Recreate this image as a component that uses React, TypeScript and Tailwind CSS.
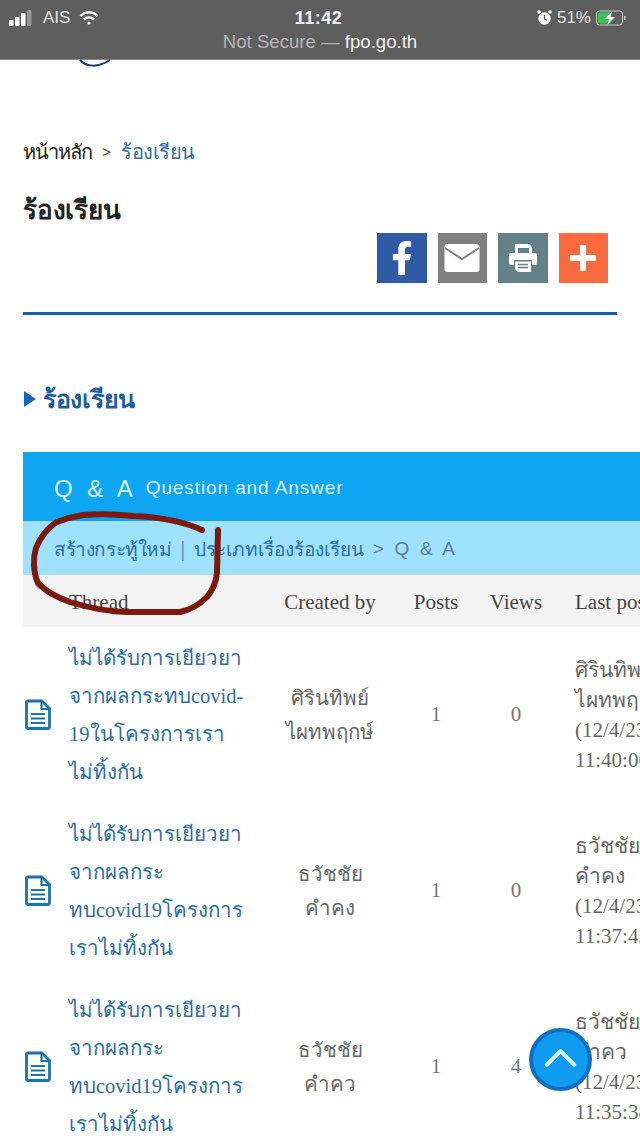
import { ChevronUp } from "lucide-react";
import { FaFacebookF } from "react-icons/fa";

const rows = [
  {
    title: ["ไม่ได้รับการเยียวยา", "จากผลกระทบcovid-", "19ในโครงการเรา", "ไม่ทิ้งกัน"],
    by: ["ศิรินทิพย์", "ไผทพฤกษ์"],
    views: 0,
    last: ["ศิรินทิพย์", "ไผทพฤกษ์", "(12/4/23", "11:40:06"],
  },
  {
    title: ["ไม่ได้รับการเยียวยา", "จากผลกระ", "ทบcovid19โครงการ", "เราไม่ทิ้งกัน"],
    by: ["ธวัชชัย", "คำคง"],
    views: 0,
    last: ["ธวัชชัย", "คำคง", "(12/4/23", "11:37:42"],
  },
  {
    title: ["ไม่ได้รับการเยียวยา", "จากผลกระ", "ทบcovid19โครงการ", "เราไม่ทิ้งกัน"],
    by: ["ธวัชชัย", "คำคว"],
    views: 4,
    last: ["ธวัชชัย", "คำคว", "(12/4/23", "11:35:38"],
  },
];

function DocIcon() {
  return (
    <svg width="28" height="32" viewBox="0 0 28 32" fill="none" stroke="#1f6fb2" strokeWidth="2.8" strokeLinejoin="round">
      <path d="M2.5 3.5 a1.5 1.5 0 0 1 1.5-1.5 H18 L25.5 9.5 V28 a1.5 1.5 0 0 1-1.5 1.5 H4 a1.5 1.5 0 0 1-1.5-1.5 Z" />
      <path d="M17.5 2 V10 H25.5" strokeWidth="2.2" />
      <path d="M7 15 H21 M7 19.5 H21 M7 24 H21" strokeWidth="1.8" />
    </svg>
  );
}

function ShareBox({ color, children }: { color: string; children: React.ReactNode }) {
  return <div className={`flex h-[49.5px] w-[49.5px] items-center justify-center text-white ${color}`}>{children}</div>;
}

export default function App() {
  return (
    <div className="relative h-[1138px] w-[640px] overflow-hidden bg-white font-['Liberation_Serif','Noto_Sans',serif]">
      {/* Safari bar */}
      <div className="h-[60px] bg-[#5e5e5e] border-b border-[#8a8a8a] font-['Liberation_Sans',sans-serif] text-white">
        <div className="flex h-[34px] items-center justify-between pl-[9px] pr-[12px] pt-[1px]">
          <div className="flex w-[200px] items-center gap-[7px]">
            <svg width="27" height="18" viewBox="0 0 27 18" fill="white">
              <rect x="0" y="11" width="4.5" height="6" rx="1" />
              <rect x="6" y="8" width="4.5" height="9" rx="1" />
              <rect x="12" y="4" width="4.5" height="13" rx="1" />
              <rect x="18" y="1" width="4.5" height="16" rx="1" opacity="0.35" />
            </svg>
            <span className="text-[17px] text-[#e4e4e4]">AIS</span>
            <svg width="20" height="16" viewBox="0 0 20 16" fill="none" stroke="white" strokeWidth="2.4" className="ml-[2px]">
              <path d="M1.5 6 C6 1.2 14 1.2 18.5 6" />
              <path d="M5 9.5 C8 6.8 12 6.8 15 9.5" />
              <circle cx="10" cy="13" r="1.6" fill="white" stroke="none" />
            </svg>
          </div>
          <span className="text-[18px] font-bold leading-none text-[#f2f2f2] tracking-[0.5px]">11:42</span>
          <div className="flex w-[200px] items-center justify-end gap-[5px]">
            <svg width="15" height="17" viewBox="0 0 15 17" fill="white">
              <circle cx="7.5" cy="9.5" r="6.2" />
              <circle cx="2" cy="3" r="1.8" />
              <circle cx="13" cy="3" r="1.8" />
              <path d="M7.5 6 V10 L10 11.5" stroke="#5e5e5e" strokeWidth="1.2" fill="none" />
            </svg>
            <span className="text-[17px] text-[#e4e4e4]">51%</span>
            <svg width="32" height="16" viewBox="0 0 32 16" fill="none">
              <rect x="0.5" y="1" width="26" height="14" rx="3" stroke="#c8c8c8" strokeWidth="1" />
              <rect x="2" y="2.5" width="13" height="11" rx="1.5" fill="#3cc35a" />
              <path d="M16 1.5 L9 9 H13.5 L11.5 14.5 L19 7 H14.5 Z" fill="white" />
              <rect x="28" y="6" width="1.5" height="4" fill="#c8c8c8" />
            </svg>
          </div>
        </div>
        <div className="text-center text-[18.6px] leading-[16px] text-[#b5b5b5]">
          Not Secure — <span className="text-[#f0f0f0]">fpo.go.th</span>
        </div>
      </div>

      {/* cropped logo under the bar */}
      <svg className="absolute left-[76px] top-[58px]" width="38" height="12" viewBox="0 0 38 12" fill="none">
        <path d="M4 2 C10 9 22 10 34 2" stroke="#1b3a6b" strokeWidth="2" />
      </svg>

      <div className="px-[23px] font-['Noto_Sans',sans-serif]">
        {/* Breadcrumb */}
        <div className="mt-[74px] flex h-[36px] items-center text-[20px] tracking-[-1px]">
          <span className="text-[#222]">หน้าหลัก</span>
          <span className="mx-[10px] text-[16px] text-[#444]">&gt;</span>
          <span className="ml-[1px] tracking-[-0.5px] text-[#2a6da6]">ร้องเรียน</span>
        </div>
        <h1 className="mt-[21px] h-[36px] text-[26px] font-semibold leading-[36px] text-[#222] tracking-[-0.2px]">ร้องเรียน</h1>

        {/* Share buttons */}
        <div className="mt-[6px] flex w-[585px] justify-end gap-[11px]">
          <ShareBox color="bg-[#2f5aa6]">
            <FaFacebookF size={34} />
          </ShareBox>
          <ShareBox color="bg-[#808080]">
            <svg width="36" height="30" viewBox="0 0 36 30">
              <rect x="0.5" y="1" width="35" height="28" rx="3" fill="white" />
              <path d="M1 5 L18 16 L35 5" fill="none" stroke="#808080" strokeWidth="2" />
            </svg>
          </ShareBox>
          <ShareBox color="bg-[#648088]">
            <svg width="30" height="30" viewBox="0 0 30 30" fill="white">
              <path d="M7 1 H21 L24 4 V10 H21 V5 H10 V10 H7 Z" />
              <path d="M3 10 H27 A2 2 0 0 1 29 12 V20 A2 2 0 0 1 27 22 H24 V17 H6 V22 H3 A2 2 0 0 1 1 20 V12 A2 2 0 0 1 3 10 Z" />
              <path d="M7 18.5 H23 V29 H10 L7 26 Z" />
              <path d="M10 21.5 H20 M10 24.5 H20" stroke="#648088" strokeWidth="1.4" />
            </svg>
          </ShareBox>
          <div className="flex h-[49.5px] w-[49.5px] items-center justify-center bg-[#f96a3f]">
            <svg width="26" height="26" viewBox="0 0 26 26" fill="white">
              <path d="M10 0 H16 V10 H26 V16 H16 V26 H10 V16 H0 V10 H10 Z" />
            </svg>
          </div>
        </div>
        <div className="mt-[29.5px] h-[3px] w-[594px] bg-[#1a5fb0]" />

        {/* Section heading */}
        <div className="mt-[64px] flex h-[40px] items-center gap-[7px]">
          <span className="ml-[1px] h-0 w-0 border-y-[8px] border-l-[12px] border-y-transparent border-l-[#1466b8]" />
          <span className="text-[25px] font-semibold tracking-[-0.3px] text-[#1d5f9e]">ร้องเรียน</span>
        </div>

        {/* Board */}
        <div className="mt-[33px] w-[700px]">
          <div className="flex h-[69px] items-center bg-[#0ea5f2] pl-[31px] pt-[4px] text-[#d8f3ff]">
            <span className="text-[24px] tracking-[4px] font-['Liberation_Sans',sans-serif]">Q &amp; A</span>
            <span className="ml-[9px] text-[19px] tracking-[0.9px] font-['Liberation_Sans',sans-serif]">Question and Answer</span>
          </div>
          <div className="flex h-[54px] items-center bg-[#a0e2fd] pl-[31px] pt-[2px] text-[19px] tracking-[-0.4px] text-[#2a6da6]">
            <span>สร้างกระทู้ใหม่</span>
            <span className="mx-[6px] text-[#5f8fb0]">|</span>
            <span className="tracking-[0px]">ประเภทเรื่องร้องเรียน</span>
            <span className="ml-[9px] font-['Liberation_Sans',sans-serif] text-[19px] tracking-[2.7px] text-[#5d7f94]">&gt; Q &amp; A</span>
          </div>

          <div className="font-['Liberation_Serif','Noto_Sans',serif]">
            <div className="grid h-[52px] grid-cols-[46px_201px_120px_92px_68px_1fr] items-center bg-[#f3f3f3] pt-[3px] text-[21px] text-[#444]">
              <span />
              <span>Thread</span>
              <span className="text-center">Created by</span>
              <span className="text-center">Posts</span>
              <span className="text-center">Views</span>
              <span className="pl-[25px]">Last post</span>
            </div>

            {rows.map((row, i) => (
              <div key={i} className="grid h-[176px] grid-cols-[46px_201px_120px_92px_68px_1fr] items-center text-[#666]">
                <div className="pl-[1px]">
                  <DocIcon />
                </div>
                <div className="text-[20.5px] leading-[38px] text-[#2a6da6] whitespace-nowrap">
                  {row.title.map((t) => (
                    <div key={t}>{t}</div>
                  ))}
                </div>
                <div className="text-center text-[20.5px] leading-[34px]">
                  {row.by.map((t) => (
                    <div key={t}>{t}</div>
                  ))}
                </div>
                <span className="text-center text-[21px] text-[#777]">1</span>
                <span className="text-center text-[21px] text-[#777]">{row.views}</span>
                <div className="whitespace-nowrap pl-[25px] text-[21px] leading-[30px]">
                  {row.last.map((t) => (
                    <div key={t}>{t}</div>
                  ))}
                </div>
              </div>
            ))}
          </div>
        </div>
      </div>

      {/* Red marker scribble over the page */}
      <svg className="pointer-events-none absolute left-0 top-[500px]" width="240" height="125" viewBox="0 0 240 125" fill="none" stroke="#7a1a10" strokeWidth="6" strokeLinecap="round" strokeLinejoin="round">
        <path d="M202 30 C190 24 165 17 133 16 C115 14 95 14 83 15 C70 17 62 20 57 22 C48 27 40 38 36 48 C33 58 33 72 38 83 C46 92 56 97 70 102 C90 108 108 112 127 112 L180 112 C190 110 200 104 207 97 C213 90 216 82 217 73 L218 30" />
      </svg>

      {/* Back to top */}
      <button className="absolute left-[529px] top-[1028px] flex h-[63px] w-[63px] items-center justify-center rounded-full border-[4px] border-[#0f6fc4] bg-[#109cf0] pb-[3px] text-[#d9f3ff]">
        <ChevronUp size={56} strokeWidth={1.8} />
      </button>
    </div>
  );
}
